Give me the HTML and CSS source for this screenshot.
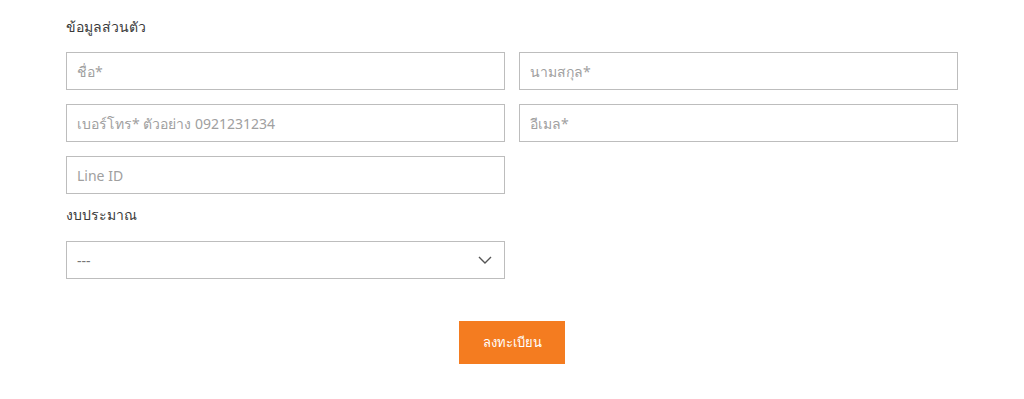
FILE: index.html
```html
<!DOCTYPE html>
<html lang="th">
<head>
<meta charset="utf-8">
<link rel="stylesheet" href="styles.css">
</head>
<body>
<form class="form">
  <h3 class="section-title">ข้อมูลส่วนตัว</h3>
  <div class="grid">
    <div class="field"><input type="text" placeholder="ชื่อ*"></div>
    <div class="field"><input type="text" placeholder="นามสกุล*"></div>
    <div class="field"><input type="text" placeholder="เบอร์โทร* ตัวอย่าง 0921231234"></div>
    <div class="field"><input type="text" placeholder="อีเมล*"></div>
    <div class="field"><input type="text" placeholder="Line ID"></div>
  </div>
  <div class="budget">
    <label class="label">งบประมาณ</label>
    <div class="select">
      <span class="select-value">---</span>
      <svg class="chevron" width="14" height="8" viewBox="0 0 14 8"><path d="M1 1 L7 7 L13 1" fill="none" stroke="#555" stroke-width="1.4"/></svg>
    </div>
  </div>
  <div class="actions">
    <button type="button" class="submit">ลงทะเบียน</button>
  </div>
</form>
</body>
</html>
```
FILE: styles.css
```css
html, body {
  margin: 0;
  padding: 0;
  background: #fff;
}
body {
  font-family: "Noto Sans", "Liberation Sans", sans-serif;
  color: #333;
}
.form {
  width: 892px;
  margin: 0 auto;
  padding-top: 17px;
}
.section-title {
  margin: 0 0 15px;
  font-size: 14px;
  line-height: 20px;
  font-weight: 400;
  color: #3a3a3a;
}
.grid {
  display: grid;
  grid-template-columns: 1fr 1fr;
  column-gap: 14px;
  row-gap: 14px;
}
.field input {
  box-sizing: border-box;
  width: 100%;
  height: 38px;
  border: 1px solid #bdbdbd;
  padding: 0 10px;
  font-family: inherit;
  font-size: 14px;
  color: #333;
  outline: none;
  background: #fff;
}
.field input::placeholder {
  color: #a0a0a0;
}
.budget {
  margin-top: 11px;
  width: 439px;
}
.label {
  display: block;
  font-size: 14px;
  line-height: 20px;
  color: #3a3a3a;
  margin-bottom: 16px;
}
.select {
  box-sizing: border-box;
  height: 38px;
  border: 1px solid #bdbdbd;
  padding: 0 12px 0 10px;
  display: flex;
  align-items: center;
  justify-content: space-between;
}
.select-value {
  font-size: 14px;
  color: #777;
}
.actions {
  display: flex;
  justify-content: center;
  margin-top: 42px;
}
.submit {
  width: 106px;
  height: 43px;
  border: none;
  background: #f47c20;
  color: #fff;
  font-family: inherit;
  font-size: 13px;
  cursor: pointer;
}
```
